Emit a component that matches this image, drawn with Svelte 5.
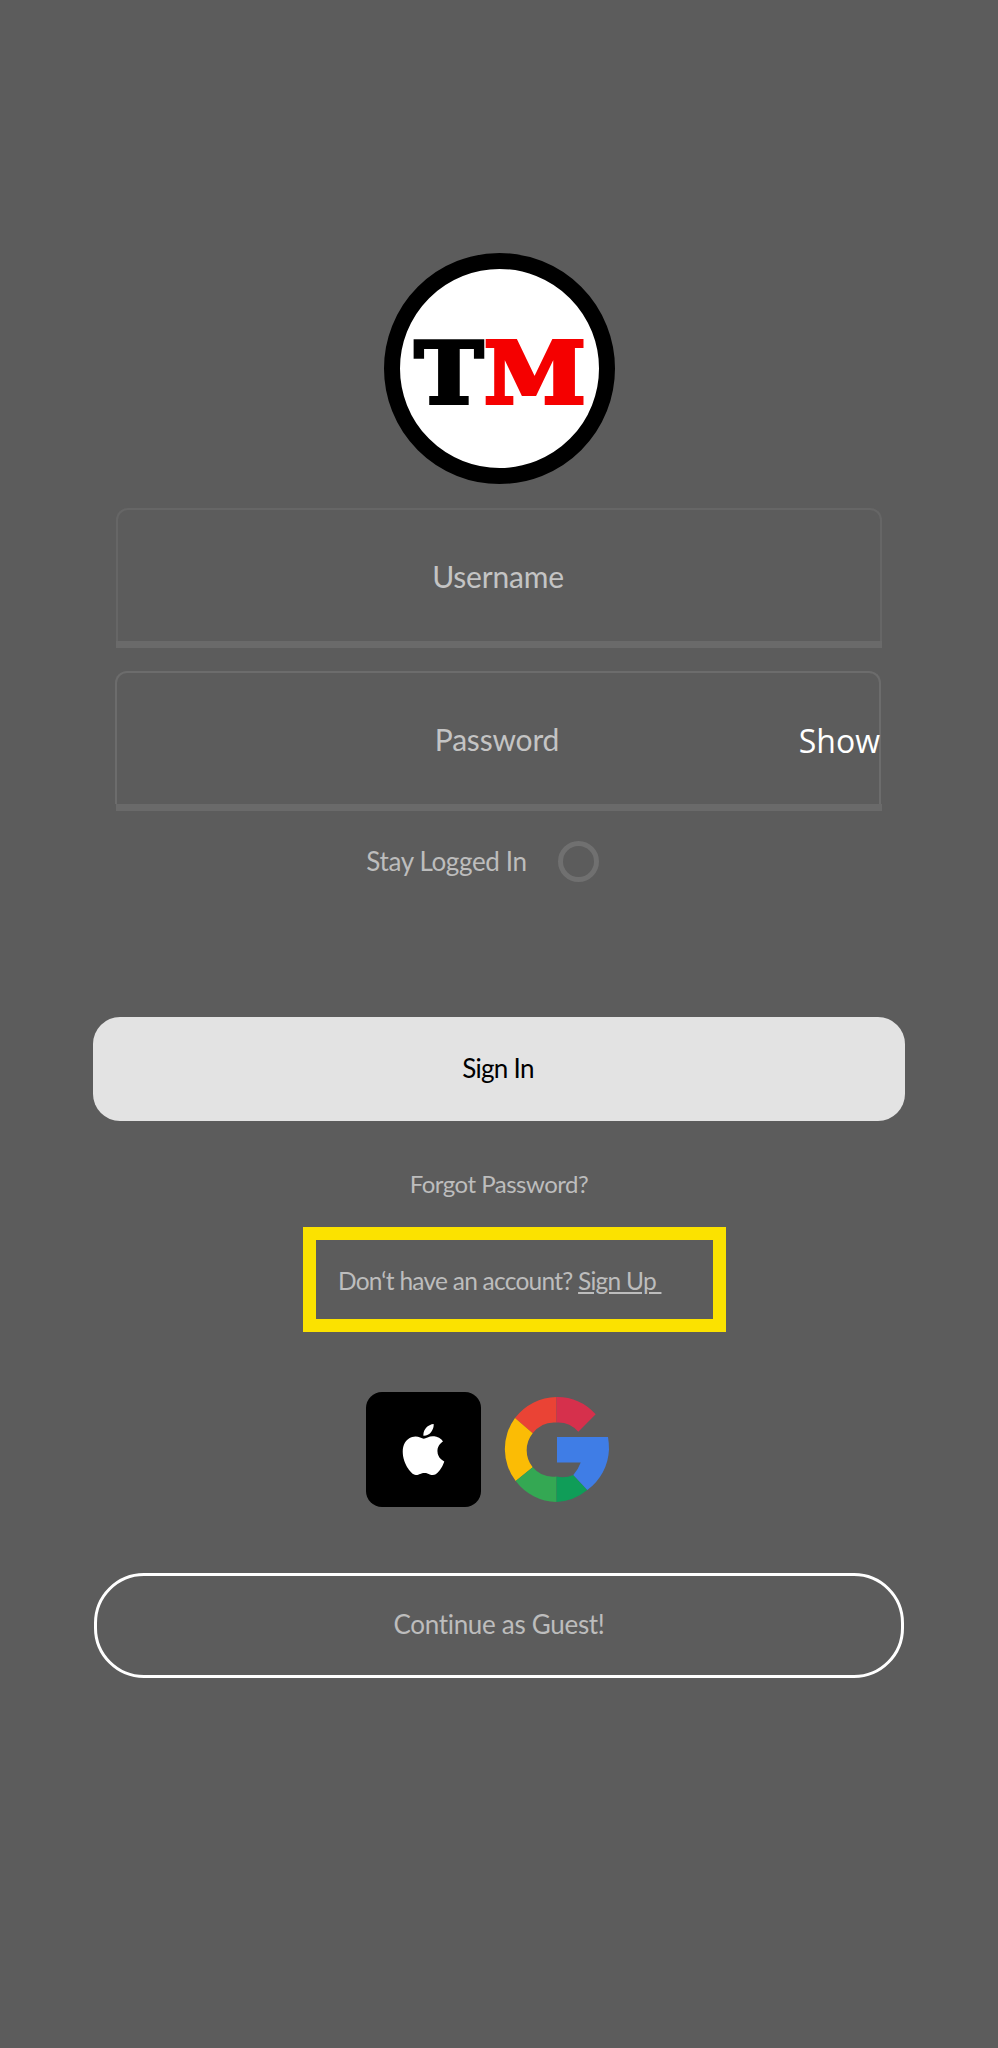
<script>
  const fields = [
    { label: 'Username', show: false },
    { label: 'Password', show: true }
  ];
</script>

<main class="page">
  <div class="logo"><div class="mark"><span class="t">T</span><span class="m">M</span></div></div>

  <div class="fields">
    {#each fields as f}
      <div class="field" class:pw={f.show}>
        <div class="box">
          <span class="placeholder">{f.label}</span>
          {#if f.show}<span class="show">Show</span>{/if}
        </div>
        <div class="bar"></div>
      </div>
    {/each}
  </div>

  <div class="stay">
    <span class="stay-label">Stay Logged In</span>
    <span class="radio"></span>
  </div>

  <button class="signin">Sign In</button>

  <div class="forgot">Forgot Password?</div>

  <div class="signup"><span>Don‘t have an account? <u>Sign Up&nbsp;</u></span></div>

  <div class="social">
    <div class="apple">
      <svg viewBox="0 0 24 24" width="51" height="51" fill="#fff">
        <path d="M12.152 6.896c-.948 0-2.415-1.078-3.96-1.04-2.04.027-3.91 1.183-4.961 3.014-2.117 3.675-.546 9.103 1.519 12.09 1.013 1.454 2.208 3.09 3.792 3.039 1.52-.065 2.09-.987 3.935-.987 1.831 0 2.35.987 3.96.948 1.637-.026 2.676-1.48 3.676-2.948 1.156-1.688 1.636-3.325 1.662-3.415-.039-.013-3.182-1.221-3.22-4.857-.026-3.04 2.48-4.494 2.597-4.559-1.429-2.09-3.623-2.324-4.39-2.376-2-.156-3.675 1.09-4.61 1.09zM15.53 3.83c.843-1.012 1.4-2.427 1.245-3.83-1.207.052-2.662.805-3.532 1.818-.78.896-1.454 2.338-1.273 3.714 1.338.104 2.715-.688 3.559-1.701"/>
      </svg>
    </div>
    <svg class="google" viewBox="0 0 105 105" width="105" height="105">
      <path fill="#ea4335" d="M11 21A52.5 52.5 0 0 1 52.5 0V25.5A27 27 0 0 0 28.7 36.3Z"/>
      <path fill="#d6304c" d="M52.5 0A52.5 52.5 0 0 1 91.7 17.3L74.3 34.7A27 27 0 0 0 52.5 25.5Z"/>
      <path fill="#fbbc05" d="M11 21A52.5 52.5 0 0 0 11.7 84L28.7 70.3A27 27 0 0 1 28.7 36.3Z"/>
      <path fill="#34a853" d="M11.7 84A52.5 52.5 0 0 0 52.5 105V79.5A27 27 0 0 1 28.7 70.3Z"/>
      <path fill="#0f9d58" d="M52.5 105A52.5 52.5 0 0 0 83.3 93L69.3 78A27 27 0 0 1 52.5 79.5Z"/>
      <path fill="#3f7de6" d="M104 40H53V65.5H76.7Q74 73 69.3 78L83.3 93A52.5 52.5 0 0 0 105 52.5Q105 46 104 40Z"/>
    </svg>
  </div>

  <button class="guest">Continue as Guest!</button>
</main>

<style>
  :global(body) {
    margin: 0;
    background: #5c5c5c;
  }
  .page {
    box-sizing: border-box;
    height: 2048px;
    padding-top: 253px;
    display: flex;
    flex-direction: column;
    align-items: center;
    background: #5c5c5c;
    font-family: Lato, "Open Sans", sans-serif;
    color: #bdbdbd;
  }
  .logo {
    box-sizing: border-box;
    width: 231px;
    height: 231px;
    border: 16px solid #000;
    border-radius: 50%;
    background: #fff;
    padding: 9px 0 0 3px;
    display: flex;
    align-items: center;
    justify-content: center;
  }
  .mark {
    display: flex;
    font-family: "DejaVu Serif", serif;
    font-weight: 700;
    font-size: 85px;
    line-height: 1;
    letter-spacing: 1px;
    -webkit-text-stroke: 4px currentColor;
    transform: scaleX(1.08);
  }
  .t { color: #000; }
  .m { color: #f50000; }
  .fields {
    margin-top: 24px;
    display: flex;
    flex-direction: column;
    gap: 23px;
  }
  .field {
    width: 766px;
    height: 140px;
    display: flex;
    flex-direction: column;
  }
  .box {
    position: relative;
    flex: 1;
    box-sizing: border-box;
    border: 2px solid #666;
    border-bottom: 0;
    border-radius: 12px 12px 0 0;
    display: flex;
    align-items: center;
    justify-content: center;
  }
  .pw .box {
    margin: 0 1px 0 -1px;
    border-color: #6c6c6c;
  }
  .placeholder {
    font-size: 30px;
    letter-spacing: -0.2px;
    color: #c4c4c4;
    margin-left: -2px;
  }
  .show {
    position: absolute;
    right: -1px;
    top: 50%;
    margin-top: -20px;
    font-family: "Open Sans", sans-serif;
    font-size: 32px;
    line-height: 44px;
    color: #fff;
  }
  .bar {
    height: 7px;
    background: #6a6a6a;
  }
  .stay {
    margin: 30px 0 0 -33px;
    height: 41px;
    display: flex;
    align-items: center;
    gap: 31px;
    font-size: 26px;
    letter-spacing: -0.35px;
  }
  .stay-label {
    padding-bottom: 2px;
  }
  .radio {
    box-sizing: border-box;
    width: 41px;
    height: 41px;
    border: 5px solid #707070;
    border-radius: 50%;
  }
  button {
    box-sizing: border-box;
    font-family: inherit;
    display: block;
    padding: 0 0 3px;
  }
  .signin {
    margin-top: 135px;
    width: 812px;
    height: 104px;
    border: 0;
    border-radius: 27px;
    background: #e3e3e3;
    color: #000;
    font-size: 26px;
    letter-spacing: -0.7px;
    padding-right: 2px;
  }
  .forgot {
    margin-top: 46px;
    font-size: 24px;
    line-height: 34px;
    letter-spacing: -0.5px;
  }
  .signup {
    box-sizing: border-box;
    margin: 26px 0 0 31px;
    width: 423px;
    height: 105px;
    border: 13px solid #fbe200;
    padding: 2px 0 0 22px;
    display: flex;
    align-items: center;
    font-size: 24.5px;
    letter-spacing: -0.75px;
    white-space: pre;
  }
  .social {
    margin: 60px 0 0 -23px;
    display: flex;
    align-items: center;
    gap: 23px;
  }
  .apple {
    width: 115px;
    height: 115px;
    background: #000;
    border-radius: 16px;
    display: flex;
    align-items: center;
    justify-content: center;
  }
  .google { display: block; }
  .guest {
    margin-top: 66px;
    width: 810px;
    height: 105px;
    border: 3px solid #fff;
    border-radius: 50px;
    background: transparent;
    color: #bdbdbd;
    font-size: 26px;
    letter-spacing: -0.3px;
  }
</style>
